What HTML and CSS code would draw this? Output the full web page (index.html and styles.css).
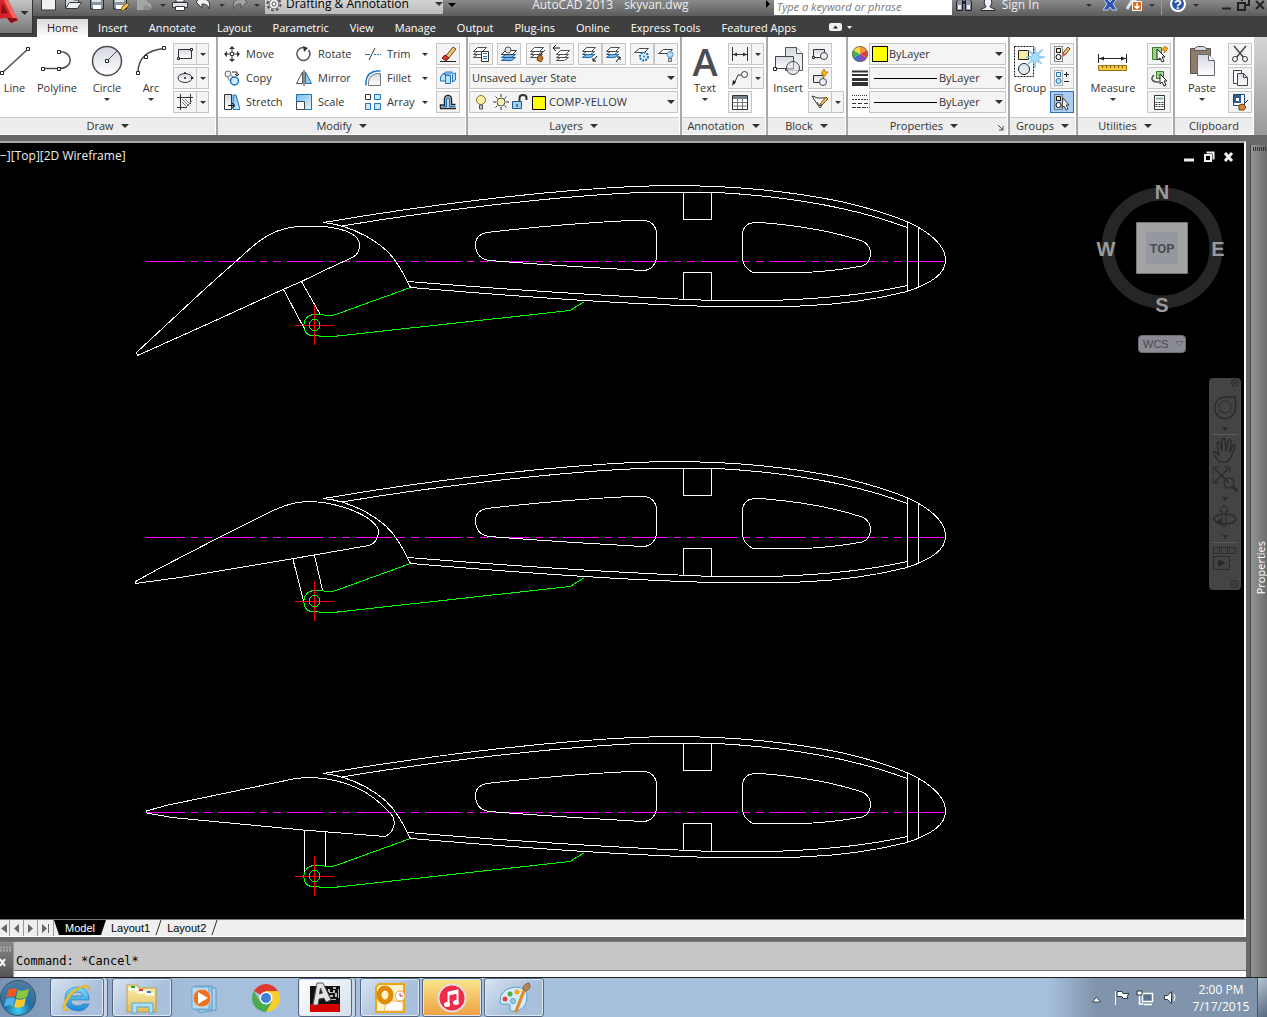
FILE: index.html
```
<!DOCTYPE html>
<html lang="en">
<head>
	<meta charset="UTF-8">
	<title>AutoCAD 2013 - skyvan.dwg</title>
	<link rel="stylesheet" href="styles.css">
</head>
<body>
<svg class="defs" aria-hidden="true">
	<defs>
		<linearGradient id="steel" x1="0" y1="0" x2="0" y2="1"><stop offset="0" stop-color="#d3d8e0"/><stop offset="1" stop-color="#ffffff"/></linearGradient>
		<linearGradient id="sky" x1="0" y1="0" x2="1" y2="1"><stop offset="0" stop-color="#6fc0ee"/><stop offset="1" stop-color="#e6f5fd"/></linearGradient>
		<radialGradient id="orb" cx=".5" cy=".85" r=".9"><stop offset="0" stop-color="#3fd3f5"/><stop offset=".4" stop-color="#1d6fa5"/><stop offset="1" stop-color="#5d7f9f"/></radialGradient>
		<linearGradient id="ie" x1="0" y1="0" x2="0" y2="1"><stop offset="0" stop-color="#7fdcf9"/><stop offset="1" stop-color="#1e86d0"/></linearGradient>
		<linearGradient id="folder" x1="0" y1="0" x2="0" y2="1"><stop offset="0" stop-color="#fdf2ae"/><stop offset="1" stop-color="#e3bd5c"/></linearGradient>
		<symbol id="sheets" viewBox="0 0 18 18" width="18" height="18">
			<g fill="#fff" stroke="#4a4d52"><path d="M1.500 12.500l4-3h8l-4 3z"/><path d="M1.500 9.500l4-3h8l-4 3z"/><path d="M1.500 6.500l4-4h9l-4 4z"/></g>
		</symbol>
		<!-- main wing section, shared by the three flap positions -->
		<g id="wing">
			<path class="center" d="M146 261.500h3"/>
			<path class="center dash" d="M149 261.500h796"/>
			<path d="M323.500 222.500C423 205.500 540 191 633 186.500C720 183 790 191 843 202C885 212 907 221 918 227C935 237 945.500 248 945.500 260C945.500 274 932 283 907 291.500C870 301 830 305 800 306H697C600 303 500 295 410.500 287.500C407 281 403 272 398 265C385 242 350 225 323.500 222.500"/>
			<path d="M342 226C413 214 540 197 640 192.500H717C780 196 850 206 907 227.500"/>
			<path d="M408 281.500C500 289 600 296 712 300.500H770C820 299 870 294 907 285.500"/>
			<path d="M683.500 192.500v27h28v-27M683.500 299.500v-27h28v28M907.500 222v69.500M918.500 227v60"/>
			<path d="M475.500 244C475.500 238 480 233.500 487 232.500Q560 224 630 220.500H645C652 221.500 656.500 227 656.500 234V257C656 264 651 270.500 643 270.500Q560 266 489 260.500C480 259 475.500 253 475.500 244"/>
			<path d="M742.500 233C743.500 227 747 223 754 222.500H760Q820 227 862 241C868 243 870.500 249 870.500 253C870.500 259 868 264 862 266Q835 271 805 272.500H753C747 270 742.500 264 742.500 258z"/>
			<path class="green" d="M410.500 287.500L333 315.500H328L320 314.500H314C301 315 301 334 311 335.500L326 336.500H333L570 310.500L584.500 301.500"/>
			<path class="red" d="M295 325.500h39M314.500 305v40"/>
			<circle class="green" cx="314.500" cy="325" r="5.500"/>
		</g>
	</defs>
</svg>

<header class="titlebar">
	<button class="app-button" aria-label="Application menu">
		<svg width="32" height="33" viewBox="0 0 32 33"><path d="M-14 26L4-8l14 28-7 3-4-5-10 1-3 8z" fill="#d8232a"/><path d="M2 3l6 10-7 1z" fill="#8d1014"/><path d="M4-8l14 28-4 1L1-6z" fill="#f26a62"/><path d="M-14 26l11-7-3 8zM7 18l4 5 7-3-2-2z" fill="#8d1014"/><path d="M20.500 11h8l-4 4z" fill="#2a2d33"/></svg>
	</button>
	<div class="titlerow">
		<button class="qa" aria-label="New"><svg width="18" height="22"><path d="M1.500 2v14h14V5" fill="#eef0f4" stroke="#33363b"/></svg></button>
		<button class="qa" aria-label="Open"><svg width="18" height="22"><path d="M1.500 14V4h6l2 2h5v2" fill="#d5dae2" stroke="#33363b"/><path d="M1.500 14.500l4-6h12l-4 6z" fill="#eef0f4" stroke="#33363b"/></svg></button>
		<button class="qa" aria-label="Save"><svg width="18" height="22"><path d="M2.500 3v12h13V3z" fill="#8a929f" stroke="#26292e"/><path d="M5 11h8v4H5z" fill="#fff"/><path d="M4 3h9v5H4z" fill="#dfe3ea"/></svg></button>
		<button class="qa" aria-label="Save As"><svg width="18" height="22"><path d="M1.500 3v12h13V3z" fill="#8a929f" stroke="#26292e"/><path d="M4 11h7v4H4z" fill="#fff"/><path d="M3 3h9v5H3z" fill="#dfe3ea"/><path d="M9 17l1-4 5-4 2 2-5 5z" fill="#f5c24a" stroke="#8a5313"/></svg></button>
		<button class="qa" aria-label="Cloud"><svg width="18" height="22"><path d="M1 3h10v5l3 1 2 4-3 3H1z" fill="#a5a5a5"/><path d="M7 15c0-4 5-5 6-2 3 0 3 3 1 3H8z" fill="#8b8b8b"/></svg></button>
		<button class="drop" aria-label="More"></button>
		<button class="qa" aria-label="Print"><svg width="18" height="22"><path d="M5 3h8v5H5z" fill="#fff" stroke="#333"/><path d="M1.500 8.500h15v5h-15z" fill="#dfe3e9" stroke="#33363b"/><path d="M4.500 12.500h9v4h-9z" fill="#fff" stroke="#33363b"/></svg></button>
		<button class="qa" aria-label="Undo"><svg width="18" height="22"><path d="M7 2v3c6 0 9 3 7 10-1-4-3-5-7-5v4L1 8z" fill="#eef0f4" stroke="#33363b"/></svg></button>
		<button class="drop" aria-label="Undo list"></button>
		<button class="qa" aria-label="Redo"><svg width="18" height="22"><path d="M11 2v3c-6 0-9 3-7 10 1-4 3-5 7-5v4l6-6z" fill="#a2a2a2" stroke="#555"/></svg></button>
		<button class="drop" aria-label="Redo list"></button>
		<label class="workspace-pick">
			<svg width="18" height="18"><circle cx="9" cy="9" r="6.500" fill="#f4f4f4" stroke="#555" stroke-width="2" stroke-dasharray="3 2"/><circle cx="9" cy="9" r="5" fill="#eee" stroke="#555"/><circle cx="9" cy="9" r="2" fill="#fff" stroke="#555"/></svg>
			<select aria-label="Workspace"><option>Drafting &amp; Annotation</option></select>
			<i class="caret"></i>
		</label>
		<button class="drop dark" aria-label="Customize"></button>
		<h1 class="title">AutoCAD 2013 <span>skyvan.dwg</span></h1>
		<svg class="play" width="10" height="22"><path d="M2 6l4 4-4 4z" fill="#000"/></svg>
		<input class="search" type="text" placeholder="Type a keyword or phrase" aria-label="Search">
		<button class="qa" aria-label="Find"><svg width="18" height="22"><path d="M1.500 16.500V8l2-4h4v12.500zM10.500 16.500V4h4l2 4v8.500z" fill="#8c93a0" stroke="#1f2226"/><path d="M7 7h4v3H7z" fill="#1f2226"/><path d="M3 11h3v4H3zM12 11h3v4h-3z" fill="#eef"/></svg></button>
		<button class="qa" aria-label="User"><svg width="18" height="22"><path d="M2 16.500c0-3 5-2 5-4-3-3-2-9 2-9s5 6 2 9c0 2 5 1 5 4z" fill="#eef0f6" stroke="#22262d"/></svg></button>
		<a class="signin" href="#">Sign In</a>
		<button class="drop account" aria-label="Account"></button>
		<button class="qa" aria-label="Exchange"><svg width="18" height="22"><path d="M2 5h4l3 3 3-3h4l-4 5 4 6h-5l-2-3-2 3H2l4-6z" fill="#2f51b0" stroke="#c5d3f4"/></svg></button>
		<button class="qa" aria-label="Updates"><svg width="18" height="22"><path d="M2 15l6-10 3 3" fill="none" stroke="#dfe3ea" stroke-width="3"/><path d="M7.500 7.500h9v9h-9z" fill="#e56a1c" stroke="#fff"/><path d="M12 9v5M9.500 12l2.500 2.500 2.500-2.500" fill="none" stroke="#fff" stroke-width="1.500"/></svg></button>
		<button class="drop" aria-label="Update list"></button>
		<i class="bar"></i>
		<button class="qa" aria-label="Help"><svg width="18" height="22"><circle cx="9" cy="10" r="7" fill="#2c57a8" stroke="#fff" stroke-width="2"/><text x="9" y="15" text-anchor="middle" class="q">?</text></svg></button>
		<button class="drop" aria-label="Help list"></button>
		<div class="winctl">
			<svg width="46" height="22"><path d="M1 14.500h9" stroke="#222" stroke-width="2"/><path d="M21 7V4h7v7h-3M17 9h7v7h-7z" fill="none" stroke="#222" stroke-width="2"/><path d="M35 7l8 8M43 7l-8 8" stroke="#222" stroke-width="2"/></svg>
		</div>
	</div>
</header>

<nav class="tabs">
	<a class="tab on" href="#">Home</a>
	<a class="tab" href="#">Insert</a>
	<a class="tab" href="#">Annotate</a>
	<a class="tab" href="#">Layout</a>
	<a class="tab" href="#">Parametric</a>
	<a class="tab" href="#">View</a>
	<a class="tab" href="#">Manage</a>
	<a class="tab" href="#">Output</a>
	<a class="tab" href="#">Plug-ins</a>
	<a class="tab" href="#">Online</a>
	<a class="tab" href="#">Express Tools</a>
	<a class="tab" href="#">Featured Apps</a>
	<svg class="tabmin" width="24" height="8"><rect width="13" height="8" rx="2" fill="#f0f0f5"/><path d="M4 5.500l2.500-3L9 5.500z" fill="#222"/><path d="M18 3h5l-2.500 3z" fill="#fff"/></svg>
</nav>

<section class="ribbon">
	<div class="panel draw">
		<div class="body">
			<button class="big w-line"><svg width="32" height="34"><path d="M3 29L29 5" stroke="#4a4d52" stroke-width="1.500"/><path d="M1.500 27.500h3v3h-3zM27.500 3.500h3v3h-3z" fill="#fff" stroke="#222"/></svg>Line</button>
			<button class="big w-poly"><svg width="32" height="34"><path d="M2 24.500h16c15 0 15-17 0-17" fill="none" stroke="#4a4d52" stroke-width="1.500"/><path d="M.5 23.500h3v3h-3zM16.500 23.500h3v3h-3zM16.500 6.500h3v3h-3z" fill="#fff" stroke="#222"/></svg>Polyline</button>
			<button class="big w-circle"><svg width="32" height="34"><circle cx="16" cy="17" r="14.500" fill="url(#steel)" stroke="#4a4d52" stroke-width="1.500"/><path d="M17 16l9-9" stroke="#4a4d52"/><path d="M14.500 15.500h3v3h-3z" fill="#fff" stroke="#222"/></svg>Circle<i class="caret small"></i></button>
			<button class="big w-arc"><svg width="32" height="34"><path d="M3 29Q3 7 29 4.500" fill="none" stroke="#4a4d52" stroke-width="1.500"/><path d="M1.500 27.500h3v3h-3zM9.500 11.500h3v3h-3zM27.500 2.500h3v3h-3z" fill="#fff" stroke="#222"/></svg>Arc<i class="caret small"></i></button>
			<div class="stack">
				<div class="split"><button aria-label="Rectangle"><svg width="18" height="18"><path d="M2.500 4.500h13v9h-13z" fill="url(#steel)" stroke="#333"/><path d="M1.500 12.500h2v2h-2zM14.500 3.500h2v2h-2z" fill="#fff" stroke="#222"/></svg></button><button class="arrow" aria-label="Rectangle list"></button></div>
				<div class="split"><button aria-label="Ellipse"><svg width="18" height="18"><ellipse cx="9" cy="9" rx="7" ry="4.500" fill="url(#steel)" stroke="#333"/><path d="M8.500 3.500h1v1h-1zM8.500 8.500h1v1h-1zM15 8.500h2v1h-2z" fill="none" stroke="#222"/></svg></button><button class="arrow" aria-label="Ellipse list"></button></div>
				<div class="split"><button aria-label="Hatch"><svg width="18" height="18"><path d="M4.500 1v16M14.500 1v10M1 4.500h16M1 14.500h10" stroke="#333" fill="none"/><path d="M6 6l7 7M6 9l5 5M9 6l5 5M10 14l6-6" stroke="#777"/></svg></button><button class="arrow" aria-label="Hatch list"></button></div>
			</div>
		</div>
		<button class="label">Draw<i class="caret"></i></button>
	</div>

	<div class="panel modify">
		<div class="body">
			<div class="cmds">
				<button class="cmd"><svg width="16" height="16"><path d="M8 0l3 3H5zM8 16l3-3H5zM0 8l3-3v6zM16 8l-3-3v6z" fill="#333"/><path d="M8 3v3M8 10v3M3 8h3M10 8h3" stroke="#333"/><path d="M6.500 6.500h3v3h-3z" fill="#fff" stroke="#333"/></svg>Move</button>
				<button class="cmd"><svg width="16" height="16"><path d="M12.500 4A6.500 6.500 0 1 1 8 1.500" fill="none" stroke="#555" stroke-width="1.500"/><path d="M7 0l5 2-4 4z" fill="#333"/></svg>Rotate</button>
				<button class="cmd"><svg width="16" height="16"><path d="M0 8.500h5M9 8.500h2M12 8.500h2M15 8.500h1" stroke="#1b74bd"/><path d="M4 14L10 2" stroke="#333"/></svg>Trim</button>
				<button class="mini" aria-label="Trim list"></button>
				<button class="cmd"><svg width="16" height="16"><circle cx="4" cy="4" r="3" fill="#eee" stroke="#666"/><path d="M8 2h5v3M11 4l2 2 2-2" fill="none" stroke="#222"/><circle cx="6.500" cy="8" r="2.500" fill="#eee" stroke="#888"/><circle cx="10.500" cy="11" r="4" fill="#cfe7f8" stroke="#1b74bd" stroke-width="1.500"/></svg>Copy</button>
				<button class="cmd"><svg width="16" height="16"><path d="M6.500 2v11.500h-6z" fill="#fff" stroke="#555"/><path d="M9.500 2v11.500h6z" fill="#8ecbf0" stroke="#1b74bd"/><path d="M8 0v16" stroke="#222"/></svg>Mirror</button>
				<button class="cmd"><svg width="16" height="16"><path d="M1 15.500v-4Q2 2 12 1h3.500" fill="none" stroke="#1b74bd" stroke-width="1.500"/><path d="M3.500 15.500v-4q1-7 9-8h3v12z" fill="url(#steel)" stroke="#777"/></svg>Fillet</button>
				<button class="mini" aria-label="Fillet list"></button>
				<button class="cmd"><svg width="16" height="16"><path d="M.5.500h7v15h-7z" fill="url(#steel)" stroke="#333"/><path d="M9 1h3l4 14.500H9z" fill="url(#sky)" stroke="#1b74bd"/><path d="M4 11.500h6M8 9l3 2.500L8 14" stroke="#111" fill="none"/></svg>Stretch</button>
				<button class="cmd"><svg width="16" height="16"><path d="M.5.500h15v15H.5z" fill="url(#sky)" stroke="#1b74bd"/><path d="M.5 7.500h8v8h-8z" fill="#fff" stroke="#444"/></svg>Scale</button>
				<button class="cmd"><svg width="16" height="16"><path d="M.5.500h5v5h-5z" fill="#fff" stroke="#333"/><path d="M9.500.500h6v5h-6zM.5 9.500h5v6h-5zM9.500 9.500h6v6h-6z" fill="#cfe7f8" stroke="#1b74bd"/></svg>Array</button>
				<button class="mini" aria-label="Array list"></button>
			</div>
			<div class="stack">
				<button class="box" aria-label="Erase"><svg width="18" height="18"><path d="M6 12L14 2l3 2-8 10z" fill="#f2c277" stroke="#6b4a1d"/><path d="M3 13l3-3 4 3-3 3z" fill="#d6362c" stroke="#6b1d1d"/><path d="M1 16.500h16" stroke="#222"/></svg></button>
				<button class="box" aria-label="Explode"><svg width="18" height="18"><path d="M1.500 8l2-3h3v7h-5zM6.500 3h7l-2 2h-7zM6.500 6.500h5v8h-5zM13.500 5l3-1v7l-3 2z" fill="#bfe1f7" stroke="#1b74bd"/></svg></button>
				<button class="box" aria-label="Offset"><svg width="18" height="18"><path d="M1 15.500h16M1.500 15v-3h4V6a3.500 3.500 0 0 1 7 0v5.500h4" fill="none" stroke="#222" stroke-width="1.500"/><path d="M3.500 13.500h4V6.500a1.500 1.500 0 0 1 3 0v7h6" fill="none" stroke="#1b74bd" stroke-width="1.500"/></svg></button>
			</div>
		</div>
		<button class="label">Modify<i class="caret"></i></button>
	</div>

	<div class="panel layers">
		<div class="body column">
			<div class="iconrow">
				<button class="box" aria-label="Layer Properties"><svg width="18" height="18"><use href="#sheets"/><path d="M9.500 6.500h7v10h-7z" fill="#fff" stroke="#333"/><path d="M11 8.500h4M11 11.500h4M11 13.500h4" stroke="#1b74bd"/></svg></button>
				<button class="box" aria-label="Match Layer"><svg width="18" height="18"><path d="M1.500 15.500l4-3h10l-4 3zM1.500 12.500l4-3h10l-4 3z" fill="#72baf0" stroke="#1b5f9d"/><path d="M1.500 9.500l4-4h11l-4 4z" fill="#fff" stroke="#333"/><circle cx="8" cy="5" r="3" fill="#dbe6ef" stroke="#555"/></svg></button>
				<div class="pair"><button class="box" aria-label="Make Current"><svg width="18" height="18"><use href="#sheets"/><path d="M16 5l-6 6" stroke="#333"/><path d="M8 15l1-4 3-1 2 3-2 4z" fill="#c5762b" stroke="#7a3c0d"/></svg></button><button class="box" aria-label="Previous"><svg width="18" height="18"><use href="#sheets" x="2" y="3"/><path d="M0 3h7M3 0L0 3l3 3" stroke="#111" fill="none"/></svg></button></div>
				<div class="pair"><button class="box" aria-label="Isolate"><svg width="18" height="18"><use href="#sheets"/><path d="M1.500 12.500l4-3h8l-4 3z" fill="#72baf0" stroke="#1b74bd"/><path d="M16 11l-4 5M12 13v3h3" stroke="#111" fill="none"/></svg></button><button class="box" aria-label="Unisolate"><svg width="18" height="18"><use href="#sheets"/><path d="M1.500 12.500l4-3h8l-4 3z" fill="#72baf0" stroke="#1b74bd"/><path d="M11 17l4-5M12 12h3v3" stroke="#111" fill="none"/></svg></button></div>
				<div class="pair"><button class="box" aria-label="Freeze"><svg width="18" height="18"><path d="M1.500 7.500l5-4h9l-4 4z" fill="#fff" stroke="#444"/><circle cx="11" cy="11.500" r="4" fill="#e6f3fc" stroke="#1b74bd" stroke-width="2" stroke-dasharray="2 1"/><circle cx="11" cy="11.500" r="1" fill="#1b74bd"/></svg></button><button class="box" aria-label="Off"><svg width="18" height="18"><path d="M1.500 8.500l5-4h9l-4 4z" fill="#fff" stroke="#444"/><circle cx="13" cy="9.500" r="3" fill="#b8dcf7" stroke="#4a90c8"/><path d="M11.500 13.500h3v3h-3z" fill="#ddd" stroke="#666"/></svg></button></div>
			</div>
			<label class="combo"><select aria-label="Layer state"><option>Unsaved Layer State</option></select><i class="caret"></i></label>
			<label class="combo">
				<svg width="77" height="18"><circle cx="9" cy="7" r="4.500" fill="#fdeea5" stroke="#8a7430"/><path d="M7.500 12h3v4h-3z" fill="#ccc" stroke="#555"/><circle cx="29" cy="9" r="4" fill="#fff2ae" stroke="#555"/><path d="M29 1v3M29 14v3M21 9h3M34 9h3M23.500 3.500l2 2M32.500 12.500l2 2M34.500 3.500l-2 2M25.500 12.500l-2 2" stroke="#333"/><path d="M47.500 8V5q0-3 3.500-3t3.500 3v2" fill="none" stroke="#333" stroke-width="2"/><path d="M40.500 8.500h9v7h-9z" fill="#9cd3f3" stroke="#235a80"/><path d="M45 11v3" stroke="#123"/><path d="M60.500 3.500h13v13h-13z" fill="#ff0" stroke="#000"/></svg>
				<select aria-label="Layer"><option>COMP-YELLOW</option></select><i class="caret"></i>
			</label>
		</div>
		<button class="label">Layers<i class="caret"></i></button>
	</div>

	<div class="panel annotation">
		<div class="body">
			<button class="big w-text"><b class="glyph">A</b>Text<i class="caret small"></i></button>
			<div class="stack">
				<div class="split"><button aria-label="Linear dimension"><svg width="18" height="18"><path d="M1.500 2v14M16.500 2v14M2 9.500h14" stroke="#333"/><path d="M2 9.500l4-2v4zM16 9.500l-4-2v4z" fill="#333"/></svg></button><button class="arrow" aria-label="Dimension list"></button></div>
				<div class="split"><button aria-label="Leader"><svg width="18" height="18"><path d="M3 15l4-9h4" stroke="#333" fill="none"/><circle cx="13.500" cy="5.500" r="3" fill="#fff" stroke="#333"/><path d="M1 17l1-6 3 2z" fill="#222"/></svg></button><button class="arrow" aria-label="Leader list"></button></div>
				<button class="box" aria-label="Table"><svg width="18" height="18"><path d="M1.500 2.500h15v14h-15z" fill="#fff" stroke="#333"/><path d="M2 3h14v3H2z" fill="#7b818a"/><path d="M2 9.500h14M2 13h14M6.500 6v10M11.500 6v10" stroke="#777"/></svg></button>
			</div>
		</div>
		<button class="label">Annotation<i class="caret"></i></button>
	</div>

	<div class="panel block">
		<div class="body">
			<button class="big w-insert"><svg width="32" height="34"><path d="M13.500 3.500h11l6 6v17h-17z" fill="url(#steel)" stroke="#555"/><path d="M24.500 3.500v6h6" fill="#fff" stroke="#555"/><path d="M3.500 12.500h18v12H3.500z" fill="url(#steel)" stroke="#444"/><circle cx="21" cy="24" r="6.500" fill="#e3e6eb" fill-opacity=".8" stroke="#444"/><path d="M21.500 18v7H15" fill="none" stroke="#888"/><path d="M1.500 23.500h3v3h-3z" fill="#fff" stroke="#222"/></svg>Insert</button>
			<div class="stack">
				<button class="box" aria-label="Create"><svg width="18" height="18"><path d="M2.500 4.500h11v8h-11z" fill="url(#steel)" stroke="#333"/><circle cx="13" cy="11" r="3.500" fill="#eef" stroke="#444"/><path d="M1.500 11.500h2v2h-2z" fill="#fff" stroke="#222"/></svg></button>
				<button class="box" aria-label="Edit block"><svg width="18" height="18"><path d="M2.500 6.500h10v7h-10z" fill="url(#steel)" stroke="#333"/><circle cx="12" cy="13" r="3.500" fill="#eef" stroke="#444"/><path d="M13 0l-3 5h3l-1 4 5-6h-3z" fill="#ffc01e" stroke="#c77a00"/></svg></button>
				<div class="split"><button aria-label="Edit attributes"><svg width="18" height="18"><path d="M1 3l3 1 2 1h10l-7 10-5-7z" fill="#fff" stroke="#333"/><path d="M6 9l3 4 3-4" fill="none" stroke="#333"/><path d="M9 11l6-7 2 2-6 6z" fill="#f2b35a" stroke="#8a5313"/></svg></button><button class="arrow" aria-label="Attribute list"></button></div>
			</div>
		</div>
		<button class="label">Block<i class="caret"></i></button>
	</div>

	<div class="panel properties">
		<div class="body column">
			<div class="prop"><svg width="18" height="18"><path d="M9 9V1a8 8 0 0 1 7 4z" fill="#f39a2b"/><path d="M9 9l7-4a8 8 0 0 1 0 8z" fill="#e43d2f"/><path d="M9 9l7 4a8 8 0 0 1-7 4z" fill="#8d4ab0"/><path d="M9 9v8a8 8 0 0 1-7-4z" fill="#3f6fd0"/><path d="M9 9l-7 4a8 8 0 0 1 0-8z" fill="#3fae49"/><path d="M9 9L2 5a8 8 0 0 1 7-4z" fill="#f5df45"/><circle cx="9" cy="9" r="7.500" fill="none" stroke="#777"/></svg><label class="combo"><i class="swatch"></i><select aria-label="Color"><option>ByLayer</option></select><i class="caret"></i></label></div>
			<div class="prop"><svg width="18" height="18"><path d="M1 2.500h16M1 6h16" stroke="#333" stroke-width="2"/><path d="M1 10.500h16" stroke="#333" stroke-width="3"/><path d="M1 15h16" stroke="#333" stroke-width="4"/></svg><label class="combo"><i class="rule"></i><select class="short" aria-label="Lineweight"><option>ByLayer</option></select><i class="caret"></i></label></div>
			<div class="prop"><svg width="18" height="18"><path d="M1 2.500h16" stroke="#333" stroke-dasharray="1 1"/><path d="M1 6.500h16" stroke="#333" stroke-dasharray="2 1"/><path d="M1 10.500h16" stroke="#333" stroke-dasharray="4 2"/><path d="M1 14.500h16" stroke="#333" stroke-dasharray="4 1"/></svg><label class="combo"><i class="rule"></i><select class="short" aria-label="Linetype"><option>ByLayer</option></select><i class="caret"></i></label></div>
		</div>
		<button class="label"><span class="name">Properties</span><i class="caret"></i><svg class="launcher" width="6" height="6"><path d="M0 0l5 5M5 1v4H1" stroke="#444" fill="none"/></svg></button>
	</div>

	<div class="panel groups">
		<div class="body">
			<button class="big w-group"><svg width="32" height="34"><path d="M.5 2.500h19v30H.5z" fill="none" stroke="#111" stroke-dasharray="2 1"/><path d="M4.500 6.500h10v9h-10z" fill="#f6eca8" stroke="#222"/><circle cx="10" cy="25" r="5.500" fill="#e2ebf3" stroke="#222"/><path d="M21 3l1 7 7-5-5 7 7 1-7 2 4 5-6-3-1 7-2-7-6 4 5-6-6-2 7-1-5-6 6 4z" fill="#a8dcf8" stroke="#5baee0" stroke-width=".6"/></svg>Group</button>
			<div class="stack">
				<button class="box" aria-label="Ungroup"><svg width="18" height="18"><path d="M1.500 1.500h8v15h-8z" fill="none" stroke="#222" stroke-dasharray="1 1"/><path d="M3.500 3.500h4v4h-4z" fill="#f6eca8" stroke="#111"/><circle cx="5.500" cy="12" r="2.500" fill="#fff" stroke="#111"/><path d="M10 8l5-6 2 2-5 6z" fill="#f2c277" stroke="#6b4a1d"/><path d="M9 9l1-1 2 2-1 2z" fill="#e7536a"/></svg></button>
				<button class="box" aria-label="Group edit"><svg width="18" height="18"><path d="M1.500 1.500h8v15h-8z" fill="none" stroke="#666" stroke-dasharray="1 1"/><path d="M3.500 3.500h4v4h-4z" fill="#fff" stroke="#1b74bd"/><circle cx="5.500" cy="12" r="2.500" fill="#bfe1f7" stroke="#1b74bd"/><path d="M11 5.500h5M13.500 3v5M11 12.500h5" stroke="#222"/></svg></button>
				<button class="box on" aria-label="Group selection"><svg width="18" height="18"><path d="M1.500 1.500h8v15h-8z" fill="none" stroke="#222" stroke-dasharray="1 1"/><path d="M3.500 3.500h4v4h-4z" fill="#f6eca8" stroke="#111"/><circle cx="5.500" cy="12" r="2.500" fill="#fff" stroke="#111"/><path d="M10 5l6 7-3 0 2 4-2 1-2-4-2 2z" fill="#fff" stroke="#333"/></svg></button>
			</div>
		</div>
		<button class="label">Groups<i class="caret"></i></button>
	</div>

	<div class="panel utilities">
		<div class="body">
			<button class="big w-measure"><svg width="32" height="34"><path d="M1.500 10v9M29.500 10v9M2 14.500h27" stroke="#222"/><path d="M2 14.500l5-2v4zM29 14.500l-5-2v4z" fill="#222"/><path d="M1.500 21.500h28v5h-28z" fill="#f6c63c" stroke="#9b7412"/><path d="M5.500 22v2M9.500 22v2M13.500 22v2M17.500 22v2M21.500 22v2M25.500 22v2" stroke="#7a5a0a"/></svg>Measure<i class="caret small"></i></button>
			<div class="stack">
				<button class="box" aria-label="Select All"><svg width="18" height="18"><path d="M2.500 2.500h9v12h-9z" fill="#9ecf8f" stroke="#3f7a2f"/><path d="M15 1l-3 4h3l-1 3 4-5h-2z" fill="#ffb31e" stroke="#c77a00"/><path d="M7 4v11l3-2 2 4 2-1-2-4h3z" fill="#fff" stroke="#222"/></svg></button>
				<button class="box" aria-label="Quick Select"><svg width="18" height="18"><path d="M6.500 2.500h7v7h-7z" fill="#9ecf8f" stroke="#3f7a2f"/><path d="M4 6q-5 5 2 7h3" fill="none" stroke="#555" stroke-width="1.500"/><path d="M10 5v10l2-2 2 4 2-1-2-4h3z" fill="#fff" stroke="#222"/></svg></button>
				<button class="box" aria-label="Calculator"><svg width="18" height="18"><path d="M4.500 2.500h10v14h-10z" fill="#fff" stroke="#333"/><path d="M6 4.500h7v2H6z" fill="#8aa"/><path d="M6.500 9v6M9.500 9v6M12.500 9v6" stroke="#333" stroke-width="2" stroke-dasharray="1 1"/></svg></button>
			</div>
		</div>
		<button class="label">Utilities<i class="caret"></i></button>
	</div>

	<div class="panel clipboard">
		<div class="body">
			<button class="big w-paste"><svg width="32" height="34"><path d="M4.500 4.500h20v25h-20z" fill="#8c7d6c" stroke="#5b5147"/><path d="M8.500 6.500v-2l3-2h6l3 2v2z" fill="#d9dde3" stroke="#555"/><path d="M11.500 10.500h11l6 6v15h-17z" fill="url(#steel)" stroke="#667"/><path d="M22.500 10.500v6h6" fill="#fff" stroke="#667"/></svg>Paste<i class="caret small"></i></button>
			<div class="stack">
				<button class="box" aria-label="Cut"><svg width="18" height="18"><path d="M3 1l10 12M15 1L5 13" stroke="#444" stroke-width="1.500"/><circle cx="4" cy="14" r="2.500" fill="#fff" stroke="#333"/><circle cx="14" cy="14" r="2.500" fill="#fff" stroke="#333"/></svg></button>
				<button class="box" aria-label="Copy"><svg width="18" height="18"><path d="M2.500 1.500h8v13h-8z" fill="#fff" stroke="#444"/><path d="M6.500 4.500h6l4 4v8h-10z" fill="url(#steel)" stroke="#444"/><path d="M12.500 4.500v4h4" fill="none" stroke="#444"/></svg></button>
				<button class="box" aria-label="Match Properties"><svg width="18" height="18"><path d="M2.500 1.500h11v11h-11z" fill="#fff" stroke="#246"/><path d="M3 2h7v8H3z" fill="#2d5f97"/><path d="M5 5h3v3H5z" fill="#fff"/><path d="M17 7l-5 5" stroke="#333"/><path d="M8 12l4-1 3 3-2 3H8z" fill="#d6833a" stroke="#7a3c0d"/></svg></button>
			</div>
		</div>
		<button class="label">Clipboard</button>
	</div>
	<div class="ribbon-end"></div>
</section>

<main class="workarea">
	<div class="document">
		<div class="canvas">
			<svg class="drawing" width="100%" height="100%" shape-rendering="crispEdges">
				<g transform="translate(0 -143)">
					<use href="#wing"/>
					<use href="#wing" y="276"/>
					<use href="#wing" y="551"/>
					<!-- flap down -->
					<path d="M136.500 352.500L206 288L243 255C262 237 278 226.500 303 226.500H325C345 229 359.500 234 359.500 245C359.500 253 356 256 349 259L323 271L301.500 281.500L283 289.500L210 323L137.500 355.500z"/>
					<path d="M283.500 289.500L304.500 329M301.500 281.500L320 314"/>
					<!-- take-off position -->
					<path d="M135.500 581.500L160 568L220 537L270 512C285 505 295 501.500 312 501.500C340 503 372 515 378.500 530C379 538 375 545 366 546L291 559L183 577L135.500 583.500z"/>
					<path d="M293 559.500L303.500 601M314.500 555.500L322.500 590"/>
					<!-- flap up -->
					<path d="M146.500 811L166 805.500L286 780.500Q298 777.500 312 777.500C345 779 370 790 390 813C397 820 395 832 385 836.500L303 830L172 817.500L146.500 813z"/>
					<path d="M304.500 829.500v42M325.500 832v34"/>
				</g>
			</svg>
			<div class="viewlabel">&minus;][Top][2D Wireframe]</div>
			<svg class="docctl" width="52" height="12"><path d="M1 9h10" stroke="#eee" stroke-width="3"/><path d="M23.500 1.500h7v7M22 4h6v6h-6z" fill="none" stroke="#eee" stroke-width="2"/><path d="M42 2l7 8M49 2l-7 8" stroke="#eee" stroke-width="3"/></svg>
			<svg class="viewcube" width="136" height="136">
				<circle cx="68" cy="68" r="54" fill="none" stroke="#262626" stroke-width="13"/>
				<path d="M42.500 42.500h51v51h-51z" fill="#a3a3a3" stroke="#777"/><path d="M52 52h32v32H52z" fill="#96989f"/>
				<g text-anchor="middle"><text class="face" x="68" y="73">TOP</text><g class="compass"><text x="68" y="19">N</text><text x="68" y="132">S</text><text x="12" y="76">W</text><text x="124" y="76">E</text></g></g>
			</svg>
			<button class="wcs">WCS<svg width="9" height="6"><path d="M.5.500h8l-4 4z" fill="none" stroke="#6a6a72"/></svg></button>
			<div class="navbar">
				<svg width="32" height="212"><g fill="none" stroke="#2b2b2b"><circle cx="26" cy="5" r="3.500"/><path d="M24.500 3.500l3 3M27.500 3.500l-3 3"/><path d="M5.500 30a11 11 0 0 1 11-11h10v11a10.500 10.500 0 0 1-21 0z" stroke-width="1.500"/><circle cx="16" cy="29" r="6"/><path d="M8 37l4-4M20 33l4 4"/><path d="M10 84c-2-5-7-7-5-10 3-1 4 3 5 3L8 65c1-3 3-1 4 4l1 4V62c1-2 3-2 3 0l1 11 2-10c1-2 3-1 3 1l-1 10 3-7c2-1 3 0 2 2l-4 10-4 5z" stroke-width="1.500"/><path d="M5 90l15 15M20 90L5 105" stroke-width="1.500"/><path d="M4 95v-6h6M15 89h6v6M4 99v6h6"/><circle cx="20" cy="105" r="5" stroke-width="1.500"/><path d="M24 109l4 4" stroke-width="3"/><ellipse cx="16" cy="141" rx="11" ry="5" stroke-width="1.500"/><path d="M13 148v-15h-3l5-6 5 6h-3v15z"/><path d="M4.500 169.500h6v6h-6zM12.500 169.500h6v6h-6zM20.500 169.500h6v6h-6zM4.500 178.500h16v13h-16z"/><circle cx="26" cy="206" r="3.500"/><path d="M24 206h4"/></g><path d="M13 49h6l-3 4zM13 119h6l-3 4zM13 157h6l-3 4zM9 181l8 4-8 4zM7 144l5-4v7z" fill="#2b2b2b"/><path d="M3 56.500h26M3 164.500h26" stroke="#5a5a5a"/></svg>
			</div>
		</div>
		<div class="sheets">
			<button class="step" aria-label="First"><svg width="13" height="9"><path d="M9 0v9L3 4.500z" fill="#666"/></svg></button>
			<button class="step" aria-label="Back"><svg width="9" height="9"><path d="M7 0v9L2 4.500z" fill="#666"/></svg></button>
			<button class="step" aria-label="Next"><svg width="9" height="9"><path d="M2 0v9l5-4.500z" fill="#666"/></svg></button>
			<button class="step last" aria-label="Last"><svg width="11" height="9"><path d="M2 0v9l5-4.500zM8 0h1v9H8z" fill="#666"/></svg></button>
			<button class="sheet on">Model</button>
			<button class="sheet">Layout1</button>
			<svg class="slash" width="7" height="16"><path d="M1 15L6 0" stroke="#333"/></svg>
			<button class="sheet">Layout2</button>
			<svg class="slash" width="7" height="16"><path d="M1 15L6 0" stroke="#333"/></svg>
		</div>
		<div class="command">
			<div class="grip"><svg width="13" height="30"><path d="M0 5.500h11M0 8.500h11" stroke="#aaa" stroke-width="2" stroke-dasharray="2 1"/><path d="M0 17l5 7M5 17l-5 7" stroke="#fff" stroke-width="2"/></svg></div>
			<div class="console">
				<div class="history">Command: *Cancel*</div>
				<input class="prompt" type="text" aria-label="Command line">
			</div>
		</div>
	</div>
	<aside class="palette"><i class="dots"></i><span>Properties</span></aside>
</main>

<footer class="taskbar">
	<button class="start" aria-label="Start"><svg width="38" height="38"><circle cx="18" cy="19" r="17.500" fill="url(#orb)" stroke="#33536e"/><path d="M8 11q5-3 9-1l-2 8q-4-2-9 1z" fill="#ee5a24"/><path d="M18 11q5 2 11-1l-2 8q-5 3-11 1z" fill="#8cc63f"/><path d="M6 20q5-3 9-1l-2 8q-4-2-9 1z" fill="#4fb0ea"/><path d="M16 20q5 2 10-1l-2 8q-5 3-10 1z" fill="#fcc62d"/></svg></button>
	<button class="task stackd" aria-label="Internet Explorer"><svg width="34" height="34"><path d="M29 19H11q0 6 7 6 3 0 5-2h6q-3 7-11 7Q5 29 5 18T17 6q12 0 12 13zM11 15h12q-1-4-6-4t-6 4z" fill="url(#ie)" stroke="#1774bd" stroke-width=".6" fill-rule="evenodd"/><path d="M30 10q1-9-11-4Q8 11 4 22q-4 10 5 7-7 0-2-8Q12 11 21 7q8-3 9 3z" fill="#f9c623" stroke="#d99a10" stroke-width=".5"/></svg></button>
	<button class="task" aria-label="Explorer"><svg width="34" height="34"><path d="M2 4h10l2 3h17v24H2z" fill="url(#folder)" stroke="#c29b3c"/><path d="M4 8h8M12 11h9M20 13h9" stroke="#fff" stroke-width="3"/><path d="M6 5h4v2H6z" fill="#19a33b"/><path d="M14 8h4v2h-4z" fill="#d33"/><path d="M22 10h4v2h-4z" fill="#2a7fd0"/><path d="M7 32V22h21v10h-4v-6H12v6z" fill="#aee0f5" stroke="#5aa5cc"/></svg></button>
	<button class="task plain" aria-label="Media Player"><svg width="34" height="34"><path d="M12 5l17 2v22l-17 3z" fill="#a9d1ea" stroke="#5d9cc6"/><path d="M8 5h17v24H8z" fill="#93c5e6" stroke="#5d9cc6"/><path d="M5 6h17v22H5z" fill="#b9dbf0" stroke="#6aa6cd"/><circle cx="15" cy="17" r="9" fill="#f0701f" stroke="#c9d8e6"/><path d="M11 11l10 6-10 6z" fill="#fff"/></svg></button>
	<button class="task plain" aria-label="Chrome"><svg width="34" height="34"><path d="M17 17L4.900 10A14 14 0 0 1 29.100 10z" fill="#dd3b2f"/><path d="M17 17V10h12.100A14 14 0 0 1 17 31z" fill="#fccd2a"/><path d="M17 17l6 3.500L17 31A14 14 0 0 1 4.900 10L11 20.500z" fill="#4bab4e"/><circle cx="17" cy="17" r="6.500" fill="#fff"/><circle cx="17" cy="17" r="5" fill="#3f80d8"/></svg></button>
	<button class="task lit stackd" aria-label="AutoCAD"><svg width="34" height="34"><path d="M2 5h30v26H2z" fill="#111"/><path d="M20 8h2v3h-2zM25 6h3v2h-3zM27 12h2v4h-2zM22 14h3v2h-3zM30 8h1v9h-1zM23 18h5v1h-5zM21 11h4v1h-4zM25 9h2v3h-2z" fill="#bbb"/><path d="M2 23h30v8H2z" fill="#d40000"/><path d="M5 24L9 2h6l8 17-5 2-2-4-5 1-1 6zM11.500 13l3-1-2-5z" fill="#e4e4e4" stroke="#555" fill-rule="evenodd"/></svg></button>
	<button class="task" aria-label="Outlook"><svg width="34" height="34"><path d="M6 3h25v28H3V6z" fill="#fff4c9" stroke="#eca812" stroke-width="2"/><path d="M14 19l16 2v9H11z" fill="#fff" stroke="#e5b95e"/><ellipse cx="12" cy="14" rx="6" ry="7" fill="#fff4c9" stroke="#e08b06" stroke-width="5"/><circle cx="27" cy="15" r="5" fill="#fff" stroke="#e8a44f"/><path d="M27 12v3h3" fill="none" stroke="#c33"/></svg></button>
	<button class="task orange" aria-label="iTunes"><svg width="34" height="34"><circle cx="17" cy="17" r="13.500" fill="#f02b48" stroke="#e5dfe2" stroke-width="2"/><path d="M13.500 23V11.500l9-2V21" fill="none" stroke="#fff" stroke-width="2"/><path d="M13.500 13l9-2" stroke="#fff" stroke-width="3"/><ellipse cx="12" cy="23.500" rx="3" ry="2.500" fill="#fff"/><ellipse cx="21" cy="21.500" rx="3" ry="2.500" fill="#fff"/></svg></button>
	<button class="task" aria-label="Paint"><svg width="34" height="34"><path d="M3 22Q2 8 18 6q12 0 12 9 0 14-12 15-5 1-5-3 1-5-3-4-5 1-7-1z" fill="#d5ecf8" stroke="#5a9cc7"/><circle cx="8" cy="18" r="2.500" fill="#e2453c"/><circle cx="13" cy="13" r="2.500" fill="#55ad3c"/><circle cx="20" cy="11" r="2.500" fill="#f2a91c"/><circle cx="16" cy="20" r="2.500" fill="#a7cbe4" stroke="#5a9cc7"/><path d="M17 31l9-23 3 1-9 23z" fill="#e48a2d"/><path d="M26 8q0-5 6-6 3 5-3 8z" fill="#b98859" stroke="#8b6037"/></svg></button>
	<div class="tray">
		<svg width="90" height="20"><path d="M1.500 14h8l-4-5z" fill="#fff" stroke="#445"/><path d="M24.500 17V2.500M26 3.500h5l1 2h6l-2 3 1 2h-5l-1-2h-5z" fill="#fff" stroke="#2b3646"/><path d="M24.500 3v14" stroke="#fff"/><path d="M51.500 5.500h10v8h-10z" fill="#56708f" stroke="#fff" stroke-width="1.500"/><path d="M53 16.500h8M48.500 3v5M48.500 8v8h4" stroke="#fff" stroke-width="1.500" fill="none"/><path d="M46 3h5v4h-5z" fill="#fff" stroke="#333"/><path d="M73.500 7.500h3l4-4v12l-4-4h-3z" fill="#fff" stroke="#334"/><path d="M83 6q2 3 0 7" fill="none" stroke="#fff"/></svg>
		<time class="clock">2:00 PM<br>7/17/2015</time>
	</div>
	<button class="peek" aria-label="Show desktop"></button>
</footer>
</body>
</html>
```
FILE: styles.css
```
html, body {
	margin: 0;
	padding: 0;
	height: 100%;
}
body {
	display: flex;
	flex-direction: column;
	overflow: hidden;
	background: #686868;
	font-family: "Open Sans", "Noto Sans", sans-serif;
	font-size: 11px;
	line-height: 16px;
	color: #333;
}
button, select, input {
	margin: 0;
	padding: 0;
	border: 0;
	background: none;
	font: inherit;
	color: inherit;
}
select {
	appearance: none;
	flex: 1;
	min-width: 0;
}
a {
	color: inherit;
	text-decoration: none;
}
svg {
	display: block;
	flex: none;
}
.defs {
	position: absolute;
	width: 0;
	height: 0;
}
.caret {
	flex: none;
	border: 4px solid transparent;
	border-top-color: #333;
	border-bottom: 0;
}
.caret.small {
	border-width: 3px;
	border-bottom: 0;
}

/* title bar */
.titlebar {
	flex: none;
	height: 16px;
	background: linear-gradient(#8a8a8a, #5c5c5c);
}
.app-button {
	position: absolute;
	left: 0;
	top: 0;
	z-index: 2;
	overflow: hidden;
	border-right: 1px solid #333;
	border-bottom: 1px solid #333;
	background: linear-gradient(#c4c4c4, #777);
}
.titlerow {
	display: flex;
	align-items: center;
	height: 22px;
	margin-top: -6px;
	padding-left: 37px;
}
.qa {
	flex: none;
	width: 24px;
	padding-left: 3px;
}
.drop {
	flex: none;
	width: 11px;
	height: 22px;
}
.drop::before {
	content: "";
	display: block;
	width: 0;
	margin: 0 auto;
	border: 3px solid transparent;
	border-top-color: #333;
	border-bottom: 0;
}
.drop.dark::before {
	border-width: 4px;
	border-top-color: #000;
	border-bottom: 0;
}
.drop.account {
	margin-right: 4px;
}
.workspace-pick {
	display: flex;
	align-items: center;
	width: 178px;
	height: 20px;
	margin: 0 3px 2px 3px;
	background: linear-gradient(#ddd, #bbb);
	color: #000;
}
.workspace-pick select {
	font-size: 12px;
	padding-left: 3px;
}
.title {
	flex: 1;
	margin: 0;
	font-size: 12px;
	font-weight: normal;
	text-align: center;
	color: #eee;
}
.title span {
	margin-left: 8px;
}
.search {
	width: 175px;
	height: 16px;
	padding: 4px 0 0 3px;
	background: #fff;
	font-style: italic;
}
.search::placeholder {
	color: #777;
}
.signin {
	padding: 0 44px 0 2px;
	font-size: 12px;
	color: #eee;
}
.bar {
	width: 1px;
	height: 20px;
	margin: 0 4px;
	background: #999;
}
.q {
	font: bold 13px "Liberation Sans", sans-serif;
	fill: #fff;
}
.winctl {
	margin-left: 20px;
}

/* ribbon tabs */
.tabs {
	flex: none;
	display: flex;
	align-items: flex-end;
	height: 21px;
	padding-left: 37px;
	background: #3f3f3f;
	color: #fff;
}
.tab {
	padding: 0 11px 0 10px;
	line-height: 18px;
}
.tab.on {
	padding: 0 10px;
	background: linear-gradient(#d8d8d8, #fff);
	color: #222;
}
.tabmin {
	margin: 0 0 6px 22px;
}

/* ribbon */
.ribbon {
	flex: none;
	display: flex;
	height: 98px;
	background: #fff;
}
.panel {
	flex: none;
	display: flex;
	flex-direction: column;
	box-sizing: border-box;
	border-right: 2px solid #a9a9a9;
}
.draw { width: 218px; }
.modify { width: 250px; }
.layers { width: 214px; }
.annotation { width: 86px; }
.block { width: 80px; }
.properties { width: 162px; }
.groups { width: 68px; }
.utilities { width: 97px; }
.clipboard { width: 79px; border: 0; }
.ribbon-end {
	flex: 1;
	background: linear-gradient(#d6d6d6, #999);
}
.body {
	flex: 1;
	display: flex;
	justify-content: space-between;
	padding: 6px 2px 0 1px;
}
.body.column {
	flex-direction: column;
	justify-content: flex-start;
	gap: 2px;
}
.draw .body {
	padding-right: 7px;
	padding-left: 0;
}
.modify .body {
	padding: 6px 6px 0 6px;
}
.label {
	display: flex;
	align-items: center;
	justify-content: center;
	gap: 7px;
	height: 17px;
	margin: 0 1px 1px 0;
	border-top: 1px solid #ccc;
	background: #ededed;
}
.launcher {
	margin: 4px 0 0 33px;
}
.properties .label {
	justify-content: flex-end;
	padding-right: 3px;
}
.big {
	display: flex;
	flex-direction: column;
	align-items: center;
	align-self: flex-start;
}
.big svg {
	margin: 1px 0 2px;
}
.big .caret {
	margin-top: 2px;
}
.w-line { width: 29px; }
.w-poly { width: 56px; }
.w-circle { width: 44px; }
.w-arc { width: 44px; }
.w-text { width: 44px; }
.w-insert { width: 38px; }
.w-group { width: 38px; }
.w-measure { width: 70px; }
.w-paste { width: 52px; }
.glyph {
	height: 37px;
	font-size: 38px;
	font-weight: 600;
	line-height: 37px;
	color: #4a4d52;
}
.stack {
	display: flex;
	flex-direction: column;
	gap: 2px;
}
.box, .split {
	box-sizing: border-box;
	height: 22px;
	border: 1px solid #c6c6c6;
	background: #f4f4f4;
}
.box {
	width: 24px;
	padding: 0 2px;
}
.box.on {
	border-color: #2f6fb5;
	background: #a9cdf3;
}
.split {
	display: flex;
	width: 36px;
}
.split button:first-child {
	width: 22px;
	padding-left: 2px;
}
.arrow, .mini {
	display: flex;
	align-items: center;
	justify-content: center;
	width: 12px;
}
.arrow {
	border-left: 1px solid #c6c6c6;
}
.arrow::before, .mini::before {
	content: "";
	border: 3px solid transparent;
	border-top-color: #333;
	border-bottom: 0;
}
.block .box, .annotation .box {
	align-self: flex-start;
}
.cmds {
	display: grid;
	grid-template-columns: 72px 69px 54px 12px;
	grid-template-rows: repeat(3, 22px);
	row-gap: 2px;
}
.cmd {
	display: flex;
	align-items: center;
	gap: 6px;
	white-space: nowrap;
}
.iconrow, .pair, .prop {
	display: flex;
}
.iconrow {
	justify-content: space-between;
}
.combo {
	flex: none;
	display: flex;
	align-items: center;
	box-sizing: border-box;
	height: 22px;
	padding: 0 2px;
	border: 1px solid #c6c6c6;
	background: #f4f4f4;
}
.prop .combo {
	flex: 1;
}
.prop {
	align-items: center;
	padding-left: 2px;
}
.swatch {
	width: 14px;
	height: 14px;
	margin-right: 1px;
	border: 1px solid #000;
	background: #ff0;
}
.rule {
	width: 63px;
	height: 1px;
	margin-left: 2px;
	background: #000;
}
.combo .short {
	padding-left: 2px;
}

/* drawing area */
.workarea {
	flex: 1;
	display: flex;
	min-height: 0;
	padding-top: 6px;
}
.document {
	flex: 1;
	display: flex;
	flex-direction: column;
	min-width: 0;
}
.canvas {
	position: relative;
	flex: 1;
	min-height: 0;
	overflow: hidden;
	border-top: 2px solid #aaa;
	border-right: 2px solid #fff;
	background: #000;
}
.drawing {
	position: absolute;
	left: 0;
	top: 0;
	fill: none;
	stroke: #fff;
}
.green { stroke: #0f0; }
.red { stroke: #f00; }
.center { stroke: #f0f; }
.dash { stroke-dasharray: 36 6 7 6 8 6; }
.viewlabel {
	position: absolute;
	left: 0;
	top: 5px;
	font-size: 12px;
	color: #eee;
}
.docctl {
	position: absolute;
	right: 9px;
	top: 8px;
}
.viewcube {
	position: absolute;
	right: 14px;
	top: 37px;
}
.compass {
	font: bold 20px "Liberation Sans", sans-serif;
	fill: #9a9a9a;
}
.face {
	font: bold 13px Roboto, sans-serif;
	fill: #4b4e55;
}
.wcs {
	position: absolute;
	right: 58px;
	top: 192px;
	display: flex;
	align-items: center;
	gap: 6px;
	box-sizing: border-box;
	width: 48px;
	height: 18px;
	padding-left: 4px;
	border: 1px solid #6d6d75;
	border-radius: 4px;
	background: #8b8b94;
	font-family: "Liberation Sans", sans-serif;
	color: #4a4a50;
}
.navbar {
	position: absolute;
	right: 3px;
	top: 235px;
	border-radius: 4px;
	background: #444;
}

/* layout sheets */
.sheets {
	flex: none;
	display: flex;
	align-items: flex-start;
	height: 16px;
	border-top: 1px solid #777;
	border-bottom: 1px solid #fff;
	border-right: 2px solid #fff;
	background: #efefef;
	font-family: "Liberation Sans", sans-serif;
	color: #000;
}
.step {
	display: flex;
	align-items: center;
	justify-content: center;
	width: 14px;
	height: 16px;
	box-sizing: border-box;
	border-right: 1px solid #999;
}
.step:first-child {
	width: 10px;
}
.step.last {
	width: 16px;
}
.sheet {
	height: 15px;
	padding: 0 5px;
}
.sheet.on {
	padding: 0 11px;
	background: #000;
	color: #fff;
	clip-path: polygon(0 0, 100% 0, calc(100% - 5px) 100%, 5px 100%);
}

/* command line */
.command {
	flex: none;
	display: flex;
	margin-top: 4px;
	border-top: 1px solid #777;
}
.grip {
	width: 13px;
	background: linear-gradient(#888, #555);
}
.console {
	flex: 1;
	border-left: 1px solid #999;
	background: #c6c6c6;
}
.history {
	padding: 11px 2px 1px;
	font-family: "DejaVu Sans Mono", monospace;
	font-size: 12px;
	color: #000;
}
.prompt {
	display: block;
	box-sizing: border-box;
	width: 100%;
	height: 7px;
	border-top: 1px solid #777;
	background: #fff;
}
.palette {
	display: flex;
	flex-direction: column;
	width: 16px;
	margin: 4px 0 0 4px;
	border-left: 1px solid #444;
	background: linear-gradient(90deg, #959595, #6c6c6c);
	color: #fff;
}
.palette span {
	margin: 390px 0 0 2px;
	writing-mode: vertical-rl;
	transform: rotate(180deg);
	align-self: flex-start;
}
.dots {
	height: 4px;
	margin: 2px 0 0 2px;
	background: repeating-linear-gradient(90deg, #333 0 1px, transparent 1px 2px);
}

/* taskbar */
.taskbar {
	flex: none;
	display: flex;
	height: 39px;
	border-top: 1px solid #222;
	background: linear-gradient(90deg, #7b93b3 0, #a6bfdc 200px, #a6c0de calc(100% - 220px), #8094ab calc(100% - 170px), #8094ab);
}
.start {
	width: 50px;
}
.task {
	display: flex;
	align-items: center;
	justify-content: center;
	box-sizing: border-box;
	width: 60px;
	margin-right: 2px;
	border: 1px solid #536880;
	border-radius: 3px;
	background: linear-gradient(135deg, #d7e3f0, #a9c0dc 60%);
	box-shadow: inset 0 0 0 1px #dbe7f3;
}
.task.stackd {
	width: 54px;
	margin-right: 8px;
	box-shadow: inset 0 0 0 1px #dbe7f3, 3px 0 0 #c5d5e6, 4px 0 0 #536880;
}
.task.plain {
	border-color: transparent;
	background: none;
	box-shadow: none;
}
.task.lit {
	background: linear-gradient(135deg, #fff, #d5e0ec);
}
.task.orange {
	background: linear-gradient(#f8e58a, #f0a044);
}
.tray {
	display: flex;
	align-items: center;
	gap: 8px;
	margin-left: auto;
}
.clock {
	width: 64px;
	font-size: 12px;
	line-height: 17px;
	text-align: center;
	color: #fff;
}
.peek {
	width: 10px;
	margin-left: 4px;
	border-left: 1px solid #445566;
	background: linear-gradient(135deg, #b7c5d5, #56687e);
}
```
